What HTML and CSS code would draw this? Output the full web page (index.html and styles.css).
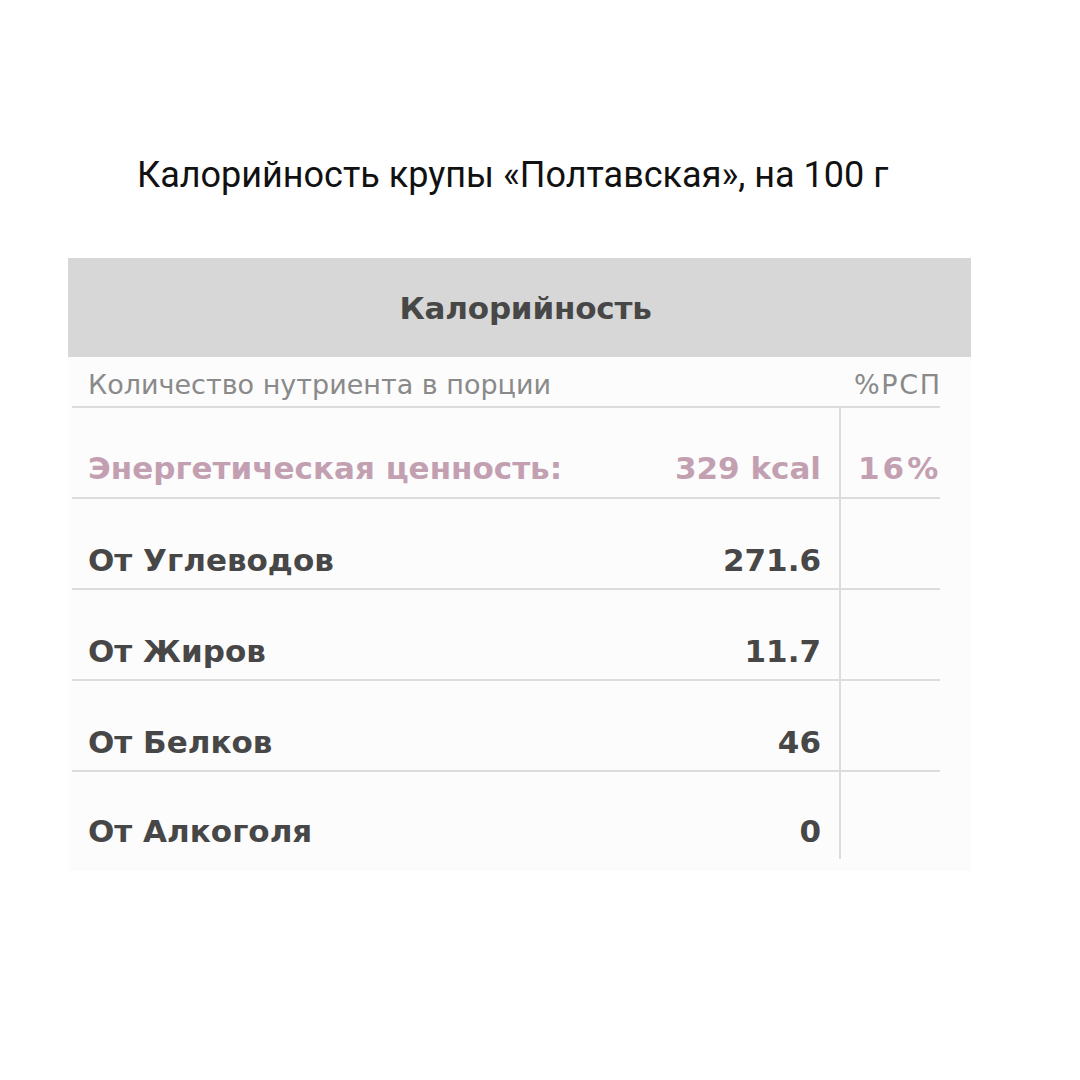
FILE: index.html
```html
<!DOCTYPE html>
<html lang="ru">
<head>
<meta charset="utf-8">
<link rel="stylesheet" href="styles.css">
</head>
<body>
<div class="page">
  <h1 class="title">Калорийность крупы «Полтавская», на 100 г</h1>
  <div class="card">
    <div class="card-head">Калорийность</div>
    <div class="card-body">
      <div class="grid">
        <div class="sub sub-left">Количество нутриента в порции</div>
        <div class="sub sub-right"><span class="sub-text">%РСП</span></div>

        <div class="cell label energy">Энергетическая ценность:</div>
        <div class="cell value energy">329 kcal</div>
        <div class="cell pct energy wide">16%</div>

        <div class="cell label">От Углеводов</div>
        <div class="cell value">271.6</div>
        <div class="cell pct"></div>

        <div class="cell label">От Жиров</div>
        <div class="cell value">11.7</div>
        <div class="cell pct"></div>

        <div class="cell label">От Белков</div>
        <div class="cell value">46</div>
        <div class="cell pct"></div>

        <div class="cell label last">От Алкоголя</div>
        <div class="cell value last">0</div>
        <div class="cell pct last"></div>
      </div>
    </div>
  </div>
</div>
</body>
</html>
```

FILE: styles.css
```css
html, body {
  margin: 0;
  padding: 0;
  background: #ffffff;
}

.page {
  width: 1080px;
  height: 1080px;
  padding-top: 150px;
  box-sizing: border-box;
}

.title {
  margin: 0 0 0 137px;
  font-family: Roboto, "Noto Sans", sans-serif;
  font-weight: 400;
  font-size: 36px;
  line-height: 50px;
  color: #111111;
  height: 50px;
}

.card {
  margin: 58px 0 0 68px;
  width: 903px;
  background: #fcfcfc;
  font-family: "DejaVu Sans", Verdana, sans-serif;
}

.card-head {
  height: 99px;
  background: #d7d7d7;
  display: flex;
  align-items: center;
  justify-content: center;
  padding-left: 12px;
  box-sizing: border-box;
  font-weight: 700;
  font-size: 31px;
  letter-spacing: -0.2px;
  color: #474747;
}

.card-body {
  padding: 0 31px 12px 4px;
}

.grid {
  display: grid;
  grid-template-columns: 680px 87px 101px;
}

.sub {
  border-bottom: 2px solid #dcdcdc;
  display: flex;
  align-items: flex-end;
  padding-bottom: 6px;
  box-sizing: content-box;
  font-size: 27px;
  color: #8a8a8a;
  line-height: 30px;
  height: 43px;
}

.sub-left {
  grid-column: 1 / 3;
  padding-left: 16px;
}

.sub-right {
  justify-content: flex-end;
}

.sub-text {
  letter-spacing: 1.6px;
  margin-right: -1.6px;
}

.cell {
  border-bottom: 2px solid #dcdcdc;
  display: flex;
  align-items: flex-end;
  box-sizing: content-box;
  height: 77px;
  padding-bottom: 12px;
  font-weight: 700;
  font-size: 31px;
  line-height: 31px;
  color: #474747;
  white-space: nowrap;
}

.cell.energy {
  height: 76px;
  padding-bottom: 13px;
}

.cell.last {
  border-bottom: none;
  height: 75px;
  padding-bottom: 12px;
}

.label {
  padding-left: 16px;
}

.value {
  justify-content: flex-end;
  padding-right: 18px;
}

.pct {
  border-left: 2px solid #dcdcdc;
  padding-left: 17px;
}

.pct.wide {
  letter-spacing: 3px;
}

.energy {
  color: #c3a0b1;
}
```
